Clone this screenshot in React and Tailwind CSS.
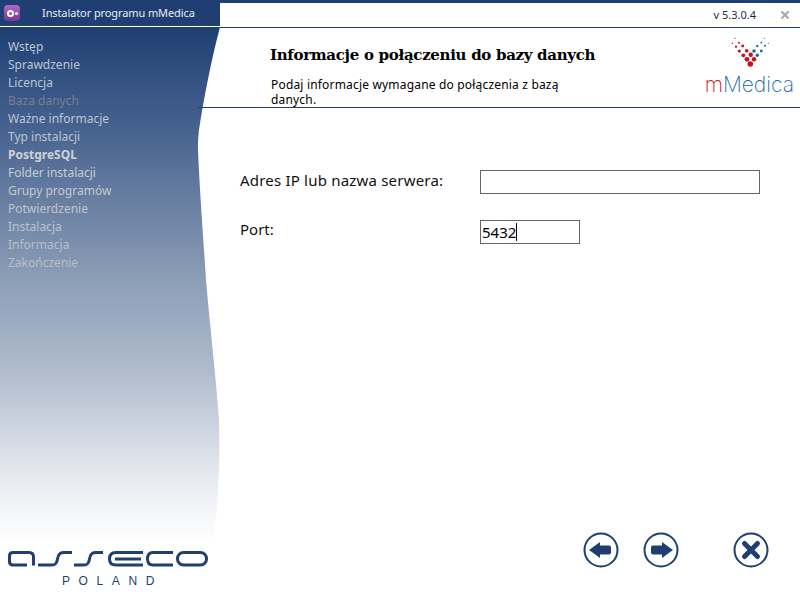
import React from "react";

const steps = [
  { label: "Wstęp", cls: "text-[#bcc5d2]" },
  { label: "Sprawdzenie", cls: "text-[#bcc5d2]" },
  { label: "Licencja", cls: "text-[#bcc5d2]" },
  { label: "Baza danych", cls: "text-[#77808f]" },
  { label: "Ważne informacje", cls: "text-[#bcc5d2]" },
  { label: "Typ instalacji", cls: "text-[#bcc5d2]" },
  { label: "PostgreSQL", cls: "text-[#ced2d8] font-bold" },
  { label: "Folder instalacji", cls: "text-[#c8ccd2]" },
  { label: "Grupy programów", cls: "text-[#c4c8ce]" },
  { label: "Potwierdzenie", cls: "text-[#c0c4ca]" },
  { label: "Instalacja", cls: "text-[#bcc2ca]" },
  { label: "Informacja", cls: "text-[#b8bec8]" },
  { label: "Zakończenie", cls: "text-[#b8bec8]" },
];

const RED = "#c8101c";
const BLUE = "#1c6aa8";

const dots = [
  [735, 38.3, 0.6, RED], [732.3, 43.3, 0.7, RED], [739, 42.7, 1, RED], [736, 46.7, 1.1, RED],
  [742.7, 46, 1.4, RED], [739.3, 51, 1.6, RED], [746.7, 50.7, 1.8, RED], [743.3, 55.3, 1.9, RED],
  [750.7, 54.7, 2.2, RED], [747, 59.3, 2.4, RED], [754, 59.3, 2.2, RED], [750.3, 64, 2.8, RED],
  [754, 51, 1.8, BLUE], [757.3, 55.3, 1.7, BLUE], [761.3, 51, 1.4, BLUE], [757.3, 46, 1.2, BLUE],
  [765, 45.7, 1, BLUE], [761.3, 42.7, 0.9, BLUE], [768.3, 43.3, 0.6, BLUE], [764.3, 38.3, 0.6, BLUE],
];

const RoundButton = ({ children }) => (
  <button className="w-9 h-9 p-0 bg-transparent">
    <svg viewBox="0 0 36 36" className="w-9 h-9 block">
      <circle cx="18" cy="18" r="16.5" fill="none" stroke="#1f3f73" strokeWidth="2" />
      {children}
    </svg>
  </button>
);

const App = () => {
  return (
    <div className="w-[800px] h-[600px] relative overflow-hidden bg-white font-['Noto_Sans','DejaVu_Sans',sans-serif] flex flex-col">
      <div className="h-[27px] flex shrink-0">
        <div className="w-[220px] bg-[#1f3f73] border-b border-white flex items-center pl-1">
          <div className="w-4 h-4 mr-[22px] rounded-sm bg-gradient-to-b from-[#b06ac8] to-[#7a3590] flex items-center justify-center gap-px">
            <span className="w-[7px] h-[7px] rounded-full border-2 border-white" />
            <span className="w-[3px] h-[3px] rounded-full bg-white" />
          </div>
          <span className="text-[11px] text-[#e6ebf3] tracking-[-0.1px]">Instalator programu mMedica</span>
        </div>
        <div className="flex-1 border-t-[3px] border-[#1f3f73] flex items-center justify-end pr-[10px]">
          <span className="text-[11px] text-[#1b2a44] mr-[24px]">v 5.3.0.4</span>
          <svg viewBox="0 0 10 10" className="w-[10px] h-[10px]">
            <path d="M1.5 1.5 L8.5 8.5 M8.5 1.5 L1.5 8.5" stroke="#a8a8a8" strokeWidth="2.2" />
          </svg>
        </div>
      </div>

      <div className="flex-1 flex relative">
        <aside className="w-[220px] shrink-0 relative h-[515px] pt-[11px] pl-2 bg-[linear-gradient(to_bottom,#1f3f73_0%,#47638f_20%,#8c9db6_49%,#b0bccd_67%,#ced4e0_78%,#e8ebf0_88%,#ffffff_100%)]">
          <ul className="relative z-10">
            {steps.map((s) => (
              <li key={s.label} className={`h-[18px] leading-[18px] text-[12px] whitespace-nowrap ${s.cls}`}>
                {s.label}
              </li>
            ))}
          </ul>
          <svg viewBox="0 0 30 515" preserveAspectRatio="none" className="absolute right-0 top-0 w-[30px] h-[515px]">
            <path
              d="M30 0 C 22 30, 14 70, 9 103 C 8 110, 8 118, 8 123 C 10 170, 14 220, 16 253 C 20 300, 26 350, 29 393 C 29.5 410, 29.5 430, 29 443 C 28 470, 26 495, 23 515 L 30 515 Z"
              fill="#ffffff"
            />
          </svg>
        </aside>

        <main className="flex-1 flex flex-col border-t border-[#1f3f73]">
          <div className="h-[80px] -ml-[22px] pl-[73px] relative flex-none border-b border-[#1f3f73]">
            <h1 className="pt-[17px] -ml-px text-[15px] leading-5 font-bold text-black font-['DejaVu_Serif','Liberation_Serif',serif] tracking-[-0.3px]">
              Informacje o połączeniu do bazy danych
            </h1>
            <p className="mt-[12px] w-[310px] text-[12px] leading-[15px] tracking-[0.18px] text-black">
              Podaj informacje wymagane do połączenia z bazą danych.
            </p>
            <div className="absolute right-[6px] top-[6px] flex flex-col items-end">
              <svg viewBox="725 34 50 34" className="w-[50px] h-[34px] mr-[19px]">
                {dots.map(([x, y, r, c], i) => (
                  <circle key={i} cx={x} cy={y} r={r} fill={c} />
                ))}
              </svg>
              <div className="mt-[7px] text-[21px] leading-5 font-['Inter',sans-serif] font-extralight text-[#1c6aa8]">
                <span className="text-[#c8101c]">m</span>Medica
              </div>
            </div>
          </div>

          <div className="pl-5 pt-[62px] flex-1">
            <div className="flex items-center h-[24px]">
              <label className="w-[240px] text-[15px] tracking-[0.2px] text-[#111] -mt-[4px]">Adres IP lub nazwa serwera:</label>
              <input className="w-[280px] h-[24px] border border-[#666] bg-white outline-none" />
            </div>
            <div className="flex items-center h-[24px] mt-[26px]">
              <label className="w-[240px] text-[15px] text-[#111] -mt-[5px]">Port:</label>
              <div className="w-[100px] h-[24px] border border-[#666] bg-white text-[15px] leading-[22px] pl-px text-black flex items-center">
                5432<span className="w-px h-[18px] bg-black" />
              </div>
            </div>
          </div>

          <div className="h-[72px] flex items-start pl-[363px] pt-[4px] gap-[24px]">
            <RoundButton>
              <path d="M6 18 L17 10 V13.5 H26 Q28 13.5 28 15.5 V20.5 Q28 22.5 26 22.5 H17 V26 Z" fill="#1f3f73" />
            </RoundButton>
            <RoundButton>
              <path d="M30 18 L19 10 V13.5 H10 Q8 13.5 8 15.5 V20.5 Q8 22.5 10 22.5 H19 V26 Z" fill="#1f3f73" />
            </RoundButton>
            <div className="w-[6px]" />
            <RoundButton>
              <path d="M11.5 11.5 L24.5 24.5 M24.5 11.5 L11.5 24.5" stroke="#1f3f73" strokeWidth="5" strokeLinecap="round" />
            </RoundButton>
          </div>
        </main>
      </div>

      <div className="absolute left-2 bottom-[12px] w-[200px] flex flex-col items-center">
        <svg viewBox="0 0 200 20" className="w-[200px] h-[20px]">
          <g fill="none" stroke="#1f3f73" strokeWidth="3">
            <path d="M19 15 H5 Q1.5 15 1.5 11.5 V6 Q1.5 2.5 5 2.5 H21 Q25.5 2.5 25.5 7 V15.5" />
            <path d="M30 15 H44 Q48 15 49 11 L50 7 Q51 2.5 56 2.5 H64" />
            <path d="M66 15 H76 Q80 15 81 11 L82 7 Q83 2.5 88 2.5 H95" />
            <path d="M135 2.5 H108 Q101.5 2.5 101.5 9 Q101.5 15 108 15 H135" />
            <path d="M107 9 H133" />
            <path d="M165 2.5 H145 Q139.5 2.5 139.5 9 Q139.5 15 145 15 H165" />
            <rect x="169.5" y="2.5" width="29" height="12.5" rx="6" />
          </g>
        </svg>
        <div className="mt-[4px] text-[12px] leading-[14px] tracking-[8.6px] text-[#1f3f73] pl-[9px] font-['Liberation_Sans',sans-serif]">POLAND</div>
      </div>
    </div>
  );
};

export default App;
